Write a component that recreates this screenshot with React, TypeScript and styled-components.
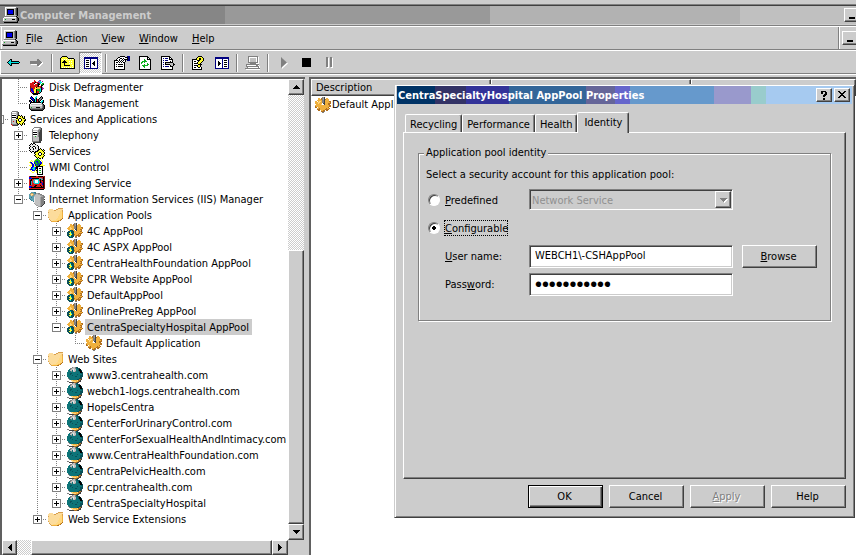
import React from "react";
import styled, { createGlobalStyle, css } from "styled-components";

const FACE = "#cccccc";
const SHADOW = "#808080";
const DARK = "#404040";
const LIGHT = "#ffffff";

const raised = css`
  border: 1px solid;
  border-color: ${LIGHT} ${DARK} ${DARK} ${LIGHT};
  box-shadow: inset -1px -1px 0 ${SHADOW};
`;

const sunken = css`
  border: 1px solid;
  border-color: ${SHADOW} ${LIGHT} ${LIGHT} ${SHADOW};
  box-shadow: inset 1px 1px 0 ${DARK}, inset -1px -1px 0 ${FACE};
`;

const dither = css`
  background: repeating-conic-gradient(#ffffff 0 25%, #cccccc 0 50%) 0 0 / 2px 2px;
`;

const GlobalStyle = createGlobalStyle`
  *, *::before, *::after { box-sizing: border-box; }
  body { margin: 0; background: ${FACE}; }
  body, button, input, select {
    font-family: "DejaVu Sans Condensed", "DejaVu Sans", Tahoma, sans-serif;
    font-size: 11px;
    color: #000000;
  }
  u { text-underline-offset: 1px; text-decoration-thickness: 1px; }
  svg { display: block; flex: none; }
`;

/* ---------- icons ---------- */

const PALETTE: Record<string, string> = {
  k: "#000000", d: "#404040", g: "#808080", l: "#c0c0c0", w: "#ffffff",
  b: "#0000e8", n: "#000080", c: "#00e0e0", t: "#0c7478", T: "#0a5058",
  y: "#ffff30", Y: "#a8a020", o: "#f0b03c", O: "#b07020", p: "#ffd880",
  r: "#d81818", R: "#801010", e: "#10b020", m: "#a020a0", s: "#e8e8e8",
  h: "#fcdc9c", H: "#d8a050", a: "#60a0b0", A: "#3a7888", q: "#a0a0a0",
};

function Pixels({ rows }: { rows: string[] }) {
  const width = Math.max(...rows.map((r) => r.length));
  const rects: React.ReactNode[] = [];
  rows.forEach((row, y) => {
    let x = 0;
    while (x < row.length) {
      let end = x + 1;
      while (end < row.length && row[end] === row[x]) end += 1;
      if (PALETTE[row[x]]) {
        rects.push(<rect key={`${x}-${y}`} x={x} y={y} width={end - x} height={1} fill={PALETTE[row[x]]} />);
      }
      x = end;
    }
  });
  return (
    <svg width={width} height={rows.length} viewBox={`0 0 ${width} ${rows.length}`} shapeRendering="crispEdges" aria-hidden="true">
      {rects}
    </svg>
  );
}

const ART = {
  computer: [
    "..wwwwwwwwwwwg..",
    "..wlllllllllgdk.",
    "..wlkkkkkkklgdk.",
    "..wlkbbbbbklgdk.",
    "..wlkbbbbbklgdk.",
    "..wlkbbbbbklgdk.",
    "..wlkbbbbbklgdk.",
    "..wlkkkkkkklgdk.",
    "..wllllllllllgk.",
    "..gggggggggggk..",
    ".wwwwwwwwwwwwgk.",
    "wllllllllllllgdk",
    "wlellllllkkklgdk",
    "wllllllllllllgdk",
    "ggggggggggggggk.",
    ".kkkkkkkkkkkkkk.",
  ],
  back: [
    "...kk........",
    "..kck........",
    ".kcckkkkkkkk.",
    "kccccccccccck",
    ".kcckkkkkkkk.",
    "..kck........",
    "...kk........",
  ],
  forward: [
    ".......gg....",
    ".......ggg...",
    "ggggggggggg..",
    "ggggggggggggw",
    "gggggggggggww",
    ".wwwwwwgggww.",
    ".......ggww..",
    "........ww...",
  ],
  up: [
    "..kkkkk........",
    ".kyyyyyk.......",
    "kyyyyyyykkkkkk.",
    "kywywywywywywyk",
    "kyyykyyyyyyyyyk",
    "kyykkkyyywywyyk",
    "kykkkkkyyyyyyyk",
    "kyyykyyyywywyyk",
    "kyyykyyyyyyyyyk",
    "kyyykkkkkkyywyk",
    "kyyyyyyyyyyyyyk",
    "kywywywywywywyk",
    "kkkkkkkkkkkkkkk",
  ],
  treeToggle: [
    "nnnnnnnnnnnnnn",
    "nnnnnnnnnnnnnn",
    "nwwwwwnwwwwwwn",
    "nwkkkwnwwwwwwn",
    "nwwwwwnwwwkwwn",
    "nwkkkwnwwkkwwn",
    "nwwwwwnwkkkwwn",
    "nwkkkwnwwkkwwn",
    "nwwwwwnwwwkwwn",
    "nwkkkwnwwwwwwn",
    "nwwwwwnwwwwwwn",
    "nnnnnnnnnnnnnn",
  ],
  paneToggle: [
    "nnnnnnnnnnnnnn",
    "nnnnnnnnnnnnnn",
    "nwwwwwwnwwwwwn",
    "nwwwwwwnwkkkwn",
    "nwwkwwwnwwwwwn",
    "nwwkkwwnwkkkwn",
    "nwwkkkwnwwwwwn",
    "nwwkkwwnwkkkwn",
    "nwwkwwwnwwwwwn",
    "nwwwwwwnwkkkwn",
    "nwwwwwwnwwwwwn",
    "nnnnnnnnnnnnnn",
  ],
  properties: [
    "......kkkkk..nnn",
    "....kkwwwwwkkknn",
    "...kwwkkwkwwwknn",
    "..kwwkwwkwkkkknn",
    "kkkkwkwkwkwk.nnn",
    "kwwwkwkwkwwk....",
    "kwkkwkwkwkk.....",
    "kwwwwwwwwwk.....",
    "kwkwkkkkkwk.....",
    "kwwwwwwwwwk.....",
    "kwkwkkkkkwk.....",
    "kwwwwwwwwwk.....",
    "kwwwwwwwwwk.....",
    "kkkkkkkkkkk.....",
  ],
  refresh: [
    "kkkkkkkkk...",
    "kwwwwwwwkk..",
    "kwwwwwwwkwk.",
    "kwwwwewwkkkk",
    "kwwwweewwwwk",
    "kwweeeeewwwk",
    "kweewewwwwwk",
    "kwewwwwwewwk",
    "kwwwwewweewk",
    "kwweeeeeewwk",
    "kwwweewwwwwk",
    "kwwwwewwwwwk",
    "kwwwwwwwwwwk",
    "kkkkkkkkkkkk",
  ],
  exportList: [
    "kkkkkkkkk.....",
    "kwwwwwwwkk....",
    "kwnwnnnwkwk...",
    "kwwwwwwwkkkk..",
    "kwnwnnnwwwwk..",
    "kwwwwwwwwkwk..",
    "kwnwkkkkkkkk..",
    "kwwwklllllllk.",
    "kwnwkkkkklllkk",
    "kwwwwwwwwkllk.",
    "kwnwnnnnwkkk..",
    "kwwwwwwwwwwk..",
    "kwwwwwwwwwwk..",
    "kkkkkkkkkkkk..",
  ],
  help: [
    "......kkkk....",
    ".....kyyyyk...",
    "....kyykkyyk..",
    "kkkkkyykkyyk..",
    "kwwwwkkkyyyk..",
    "kwkkwwkyyyk...",
    "kwwwwkyyyk....",
    "kwkkkkyyk.....",
    "kwwwwwkkkk....",
    "kwkkkkyyk.....",
    "kwwwwkyyk.....",
    "kwkkwwkkwk....",
    "kwwwwwwwwk....",
    "kkkkkkkkkk....",
  ],
  remote: [
    "...gggggggggg...",
    "...gwwwwwwwwgw..",
    "...gwllllllwgw..",
    "...gwllllllwgw..",
    "...gwllllllwgw..",
    "...gwllllllwgw..",
    "...ggggggggggw..",
    ".....ggggggwww..",
    ".ggggggggggggg..",
    ".gwwwwwwwwwggw..",
    ".gggggggggggggw.",
    "..gwwwwwwwwwwgw.",
    "ggggggggggggggg.",
    ".wwwwwwwwwwwwww.",
  ],
  gear: [
    ".......gqd......",
    "...oo.Ogqd.oo...",
    "...oooOgqdOooo..",
    "..oooooggdoooo..",
    "oo.oppoggdooooOO",
    "oooppooggdoooooO",
    "ooopooowddoooOOO",
    ".ooooopwwdoooOO.",
    "ooooooooooooooOO",
    "OoooooooooooooOO",
    "OO.ooooooooooO..",
    "..ooOooooooOooO.",
    "..OOOoooooOOOO..",
    "...OO.ooOO.OO...",
    "......OOOg......",
    ".......gg.......",
  ],
  pool: [
    ".......gqd......",
    "...oo.Ogqd.oo...",
    "...oooOgqdoooo..",
    "..oooooggdoooo..",
    ".oopoooggdooooOO",
    "oooppooggdoooooO",
    ".oopooowddoooOO.",
    "..oTTToowdooooO.",
    ".TTcTTTooooooOO.",
    "TTTyTTTooooooooO",
    "TTyycTToooooOOO.",
    "TTTyyTTOoooOoO..",
    "TTyyTTTooOOOOO..",
    ".TTcTTT.OO.OO...",
    "..TTTT..gg......",
    "................",
  ],
  globe: [
    ".....gllgTT.....",
    "...gglllgtTTT...",
    "..tgllsllttTkk..",
    ".ttlltsllttTkkT.",
    ".tttgtllgtttTkk.",
    "tttttttttttttkkT",
    "tttTTtttttttttTT",
    "tttTttttttTttttT",
    "tttttTtttttttTTT",
    "ttttttttTTtttTTT",
    ".ttttttttttttTT.",
    ".gttttttttttTTd.",
    "wwgtttttttTTOOd.",
    "wwwwppoooopOOd..",
    "ggwwwppppooOdd..",
    "..dddddOOOdd....",
  ],
  folder: [
    "..........HHHHH.",
    ".hhhh...HHhhhhh.",
    "hhhhhhHHhhhhhpH.",
    "hhhhhhhhhhhhppH.",
    "Hhhhhhhhhhhhppo.",
    "hhhhhhhhhhhhppo.",
    "hhhhhhhhhhhpppo.",
    "hhhhhhhhhhhpppo.",
    "hhhhhhhhhhppppo.",
    "Hhhhhhhhhhppppo.",
    ".hhhhhhhhpppppO.",
    ".HhhhhhhppppoO..",
    "..HhhpppppooO...",
    "...HoooooOO.....",
  ],
  server: [
    "...ggggggg..",
    "..gwwwwwlgd.",
    ".gwwwwwlggd.",
    ".glllllggdd.",
    ".gwwwwlggdd.",
    ".gkkkklgddd.",
    ".gwwwwlgddd.",
    ".gkkkklgddd.",
    ".gwwwwlgddd.",
    ".gllellgddd.",
    ".gllllllddd.",
    ".gllllllddd.",
    ".gllllllddd.",
    ".gllllllddd.",
    ".gggggggdd..",
    "..dddddddd..",
  ],
  serverGear: [
    "..gggggg........",
    ".gwwwwlgd.......",
    ".glllllgd.......",
    ".gwwwwlgd.......",
    ".gkkkklgkk.k....",
    ".gwwwwlkyykyk.k.",
    ".gkkkklkyyyykyk.",
    ".gwwwwkkykkyykk.",
    ".gllllyykwwkyyyk",
    ".gllllkykwwkyykk",
    ".glrllkyykkyyyk.",
    ".gllllkyyyyyyk..",
    ".gllllgkykyykyk.",
    ".rgggggdk.kyk.k.",
    "..rddddd...k....",
    "................",
  ],
  services: [
    "..k.kk..........",
    ".kskssks........",
    "ksssssssk.......",
    ".ksskksssk......",
    "kssk..kssk......",
    "ksssk.kssk.k....",
    ".kssksssskkyk.k.",
    "kssssssskkyyykyk",
    ".kskkskkkyyyyyk.",
    "..k..kkyyykkyyyk",
    ".....kyyyk..kyyk",
    "......kyyk..kyk.",
    ".....kyyyykkyyyk",
    "......kyyyyyyyk.",
    ".......kykyyyky.",
    "........k.kk.k..",
  ],
  defrag: [
    ".....r....mm....",
    ".....rr..mcc.m..",
    "...rrrkrrmmcc...",
    ".rrrrkwwRkrc.ee.",
    ".rrrrwrrRkk.eek.",
    ".rrrrrrrRkwwkk..",
    ".RrrrrrrRkrrk...",
    ".Rrrrrykooorkm..",
    ".RbRrryyooockmm.",
    ".Rbbryykeeeckm..",
    ".RbbryykeeeckK..",
    ".Rmbbyykrreck...",
    "..Rmbyykrrck....",
    "...kkkkkkkk.....",
    "....kkkkk.......",
  ],
  diskManage: [
    "..k....c....k...",
    ".bbk..cc...kgk..",
    ".kbbk.ck..kggk..",
    "..kbbkckrkggk...",
    "kk.kbkckrkgk.ck.",
    "kbk.kkckrkk.cck.",
    ".kkkkkkkkkkkckk.",
    ".kwwwwwwwwwwlk..",
    "kwlllllllllllgk.",
    "kssssssssssssgdk",
    "kllllllllllllgdk",
    "klellllkkkkllgdk",
    "kggggggggggggddk",
    ".kddddddddddddk.",
    "..kkkkkkkkkkkk..",
  ],
  wmi: [
    "......yeee.y....",
    "..y..yeeeee.y...",
    ".y.y.eebbeeb.y..",
    "ybb..beebeebby..",
    ".ybb.beeebebby..",
    "..ybbybebebkyy..",
    "yyybbybeebkyyyyy",
    ".y.bbyykkkkkkk..",
    "..bbccbkkwwwwk..",
    ".ybcccbkkwkkwk..",
    "ybbbccbykwwwwk..",
    ".y.bbbykkweewk..",
    "..y..y.ykwwwwk..",
    "...yy..ykweewk..",
    "........kwwwwk..",
    "........kkkkkk..",
  ],
  indexing: [
    "rkkkkkkrrkkkkkrR",
    "bbrrrrrrrrrrrrkR",
    "bbbkkkkkkkaaarkR",
    "rrkrraacccrkaakR",
    "rkkraawwwcrkrkkR",
    "rkaracwwwcakrrkR",
    "rkaracwwwcakbrkR",
    "rkarraccccrrrbkR",
    "rkarrrrrrrrrrbkR",
    "rrrrrrkkrrrkrrkR",
    "bbbrrkkrrrrrkrkR",
    "bbkkkkkkkkkkkkkR",
    "rrrrrrrrrrrrrrRR",
    "kkkkkkkkkkkkkkk.",
  ],
  iis: [
    "..aaaAA.........",
    ".aHHaaAqqgg.....",
    "aHhhHaqllqqgg...",
    "aahHaqlllllqqgg.",
    "aaaaalllllllqqgg",
    "aaAaaslllllqgggg",
    "AaaaaslllllqgggG",
    ".Aaaaslllllqgggd",
    "..AaaslllllqgggG",
    "....Aslllllqgggd",
    ".....slllllqgggd",
    ".....qlllllqgggd",
    "......qllllqggd.",
    ".......qqllqgd..",
    ".........qqgd...",
  ],
};

type IconName = keyof typeof ART;
const Icon = ({ name }: { name: IconName }) => <Pixels rows={ART[name]} />;

const Triangle = ({ dir }: { dir: "up" | "down" | "left" | "right" }) => {
  const d = { up: "M0 4h7L3.5 0z", down: "M0 0h7L3.5 4z", left: "M4 0v7L0 3.5z", right: "M0 0v7L4 3.5z" }[dir];
  const tall = dir === "left" || dir === "right";
  return (
    <svg width={tall ? 4 : 7} height={tall ? 7 : 4} shapeRendering="crispEdges" aria-hidden="true">
      <path d={d} />
    </svg>
  );
};

/* ---------- main window ---------- */

const Desktop = styled.div`
  position: relative;
  height: 100vh;
  overflow: hidden;
  display: flex;
  flex-direction: column;
  background: ${FACE};
`;

const FrameEdge = styled.div`
  flex: none;
  height: 6px;
  border-bottom: 1px solid ${DARK};
  box-shadow: inset 0 -1px 0 ${SHADOW};
`;

const TitleBar = styled.header`
  flex: none;
  display: flex;
  align-items: center;
  gap: 1px;
  height: 18px;
  padding-left: 3px;
  background: linear-gradient(90deg, #868686 0 225px, #999999 225px 490px, #b2b2b2 490px 740px, #c0c0c0 740px);
`;

const WindowTitle = styled.h1`
  flex: 1;
  margin: 0;
  font-size: 11px;
  font-weight: bold;
  color: ${FACE};
`;

const CaptionButton = styled.button<{ $overhang?: number }>`
  ${raised}
  flex: none;
  display: flex;
  align-items: center;
  justify-content: center;
  width: 16px;
  height: 14px;
  padding: 0;
  margin-right: ${(p) => -(p.$overhang ?? 0)}px;
  background: ${FACE};
`;

const MenuBand = styled.div`
  flex: none;
  display: flex;
  height: 26px;
  margin-top: 1px;
  border-top: 1px solid ${SHADOW};
  border-bottom: 1px solid ${LIGHT};
  box-shadow: inset 0 1px 0 ${LIGHT}, inset 0 -1px 0 ${SHADOW};
`;

const MenuBar = styled.nav`
  flex: 1;
  display: flex;
  align-items: center;
  gap: 8px;
  margin: 1px 0 1px 1px;
  border-left: 1px solid ${LIGHT};
  border-right: 1px solid ${SHADOW};
`;

const MenuItems = styled.div`
  display: flex;
  gap: 14px;
`;

const MenuItem = styled.button`
  padding: 1px 0 0;
  border: 0;
  background: none;
  line-height: 16px;
`;

const ChildControls = styled.div`
  flex: none;
  display: flex;
  align-items: center;
  width: 17px;
  margin: 1px 0;
  padding-left: 2px;
  border-left: 1px solid ${LIGHT};
`;

const ToolBar = styled.div`
  flex: none;
  display: flex;
  align-items: center;
  height: 24px;
  padding: 0 2px;
  border-bottom: 1px solid ${LIGHT};
  box-shadow: inset 1px 0 0 ${LIGHT}, inset 0 -1px 0 ${SHADOW};
`;

const ToolButton = styled.button<{ $pressed?: boolean }>`
  display: flex;
  align-items: center;
  justify-content: center;
  width: 23px;
  height: 22px;
  padding: 0;
  border: 1px solid transparent;
  background: none;
  ${(p) => p.$pressed && css`
    ${dither}
    border-color: ${SHADOW} ${LIGHT} ${LIGHT} ${SHADOW};
  `}
`;

const ToolDivider = styled.span`
  width: 2px;
  height: 18px;
  margin: 0 3px;
  border-left: 1px solid ${SHADOW};
  border-right: 1px solid ${LIGHT};
`;

const Panes = styled.main`
  flex: 1;
  min-height: 0;
  display: grid;
  grid-template-columns: 305px minmax(0, 1fr);
  column-gap: 4px;
  margin-top: 2px;
`;

const Pane = styled.section`
  display: flex;
  flex-direction: column;
  min-height: 0;
  overflow: hidden;
  border-top: 2px solid #606060;
  border-left: 2px solid #606060;
  background: ${LIGHT};
`;

const TreeBody = styled.div`
  flex: 1;
  min-height: 0;
  display: flex;
  border-right: 1px solid ${FACE};
`;

const Tree = styled.ul`
  flex: 1;
  min-width: 0;
  margin: 0;
  padding: 0;
  list-style: none;
  overflow: hidden;
`;

const TreeRow = styled.li`
  display: flex;
  height: 16px;
  margin-left: -12px;
  white-space: nowrap;
`;

const dots = (deg: number) =>
  `repeating-linear-gradient(${deg}deg, #808080 0 1px, transparent 1px 2px)`;

const Cell = styled.span<{ $kind: string }>`
  flex: none;
  display: flex;
  justify-content: center;
  align-items: flex-start;
  width: 19px;
  height: 16px;
  padding-top: 4px;
  background-repeat: no-repeat;
  ${(p) => p.$kind === "|" && css`
    background-image: ${dots(180)};
    background-size: 1px 16px;
    background-position: 9px 0;
  `}
  ${(p) => p.$kind === "+" && css`
    background-image: ${dots(180)}, ${dots(90)};
    background-size: 1px 16px, 10px 1px;
    background-position: 9px 0, 9px 8px;
  `}
  ${(p) => p.$kind === "L" && css`
    background-image: ${dots(180)}, ${dots(90)};
    background-size: 1px 8px, 10px 1px;
    background-position: 9px 0, 9px 8px;
  `}
`;

const Expander = styled.button<{ $open: boolean }>`
  width: 9px;
  height: 9px;
  padding: 0;
  border: 1px solid ${SHADOW};
  background:
    linear-gradient(#000, #000) center / 5px 1px no-repeat,
    linear-gradient(#000, #000) center / ${(p) => (p.$open ? "0 0" : "1px 5px")} no-repeat,
    #ffffff;
`;

const IconSlot = styled.span`
  flex: none;
  display: flex;
  align-items: center;
  justify-content: center;
  width: 19px;
  height: 16px;
  padding-right: 1px;
`;

const TreeLabel = styled.span<{ $selected?: boolean }>`
  height: 16px;
  padding: 0 3px 0 2px;
  line-height: 17px;
  background: ${(p) => (p.$selected ? FACE : "transparent")};
`;

const VScroll = styled.div`
  ${dither}
  flex: none;
  display: grid;
  grid-template-rows: 16px 155fr 274fr 16px;
  width: 16px;
`;

const HScroll = styled.div`
  ${dither}
  flex: none;
  display: grid;
  grid-template-columns: 15px 14px 1fr 16px 17px;
  height: 15px;
`;

const ScrollButton = styled.button`
  ${raised}
  display: flex;
  align-items: center;
  justify-content: center;
  padding: 0;
  background: ${FACE};
`;

const ScrollThumb = styled.div`
  ${raised}
  background: ${FACE};
`;

const ScrollCorner = styled.div`
  background: ${FACE};
`;

const ListTable = styled.table`
  width: 100%;
  border-collapse: separate;
  border-spacing: 0;
  table-layout: fixed;
`;

const ListHead = styled.th<{ $width?: number }>`
  ${raised}
  width: ${(p) => (p.$width ? `${p.$width}px` : "auto")};
  height: 17px;
  padding: 1px 4px 0;
  background: ${FACE};
  font-weight: normal;
  line-height: 14px;
  text-align: left;
`;

const ListCell = styled.td`
  padding: 0 0 0 4px;
`;

const ListEntry = styled.span`
  display: flex;
  align-items: center;
  gap: 1px;
  line-height: 17px;
  white-space: nowrap;
`;

/* ---------- dialog ---------- */

const Dialog = styled.section`
  position: absolute;
  top: 84px;
  left: 394px;
  right: 1px;
  border: 1px solid;
  border-color: ${FACE} ${DARK} ${DARK} ${FACE};
  box-shadow: inset 1px 1px 0 ${LIGHT}, inset -1px -1px 0 ${SHADOW};
  padding: 1px 2px 9px;
  background: ${FACE};
`;

const DialogTitleBar = styled.header`
  display: flex;
  align-items: center;
  gap: 2px;
  height: 18px;
  padding: 0 2px 0 1px;
  background: linear-gradient(
    90deg,
    #003366 0 38px, #333366 38px 69px, #333399 69px 112px, #336699 112px 189px,
    #666699 189px 218px, #6666cc 218px 233px, #6699cc 233px 317px,
    #9999cc 317px 354px, #99cccc 354px 369px, #a6caf0 369px
  );
`;

const DialogTitle = styled.h2`
  flex: 1;
  margin: 0;
  font-size: 11px;
  font-weight: bold;
  color: ${LIGHT};
  white-space: nowrap;
`;

const DialogBody = styled.div`
  padding: 8px 6px 0;
`;

const TabList = styled.div`
  display: flex;
  align-items: flex-end;
  height: 20px;
  padding-left: 2px;
`;

const Tab = styled.button<{ $active?: boolean }>`
  position: relative;
  height: ${(p) => (p.$active ? 21 : 18)}px;
  margin: 0 0 ${(p) => (p.$active ? -1 : 0)}px;
  padding: ${(p) => (p.$active ? "0 6px 1px" : "1px 4px 0")};
  border: 1px solid;
  border-color: ${LIGHT} ${DARK} transparent ${LIGHT};
  border-bottom: 0;
  border-radius: 2px 2px 0 0;
  box-shadow: inset -1px 0 0 ${SHADOW};
  background: ${FACE};
`;

const TabPanel = styled.div`
  ${raised}
  min-height: 347px;
  padding: 13px 14px 0;
`;

const Group = styled.fieldset`
  min-width: 0;
  margin: 0;
  padding: 8px 8px 22px;
  border: 1px solid ${SHADOW};
  box-shadow: 1px 1px 0 ${LIGHT}, inset 1px 1px 0 ${LIGHT};
`;

const GroupTitle = styled.legend`
  margin-left: -3px;
  padding: 0 2px;
  background: ${FACE};
  line-height: 14px;
`;

const Prompt = styled.p`
  margin: 0 0 7px -1px;
  line-height: 14px;
`;

const IdentityForm = styled.div`
  display: grid;
  grid-template-columns: 101px 204px 75px;
  grid-template-rows: 21px 25px 23px 23px;
  align-items: center;
  row-gap: 5px;
  padding: 0 0 2px 1px;
`;

const Choice = styled.div`
  display: flex;
  align-items: center;
  gap: 4px;
  grid-column-start: 1;
`;

const Radio = styled.input`
  appearance: none;
  flex: none;
  width: 12px;
  height: 12px;
  margin: 0;
  border: 1px solid;
  border-color: ${SHADOW} ${LIGHT} ${LIGHT} ${SHADOW};
  border-radius: 50%;
  box-shadow: inset 1px 1px 0 ${DARK};
  background: ${LIGHT};
  &:checked {
    background: radial-gradient(circle at 5px 5px, #000 0 2px, #fff 2px);
  }
`;

const ChoiceLabel = styled.label<{ $focused?: boolean }>`
  padding: 1px 0 0 1px;
  line-height: 15px;
  outline: ${(p) => (p.$focused ? "1px dotted #000" : "none")};
  outline-offset: -1px;
`;

const FieldLabel = styled.label`
  grid-column-start: 1;
  padding: 0 0 1px 17px;
`;

const TextBox = styled.input`
  ${sunken}
  width: 100%;
  height: 23px;
  padding: 0 5px 3px;
  background: ${LIGHT};
  &[type="password"] {
    padding-bottom: 0;
    font-size: 13px;
    -webkit-text-stroke: 2px #000000;
  }
`;

const SelectBox = styled.div`
  ${sunken}
  display: flex;
  height: 21px;
  padding: 1px;
  background: ${FACE};
`;

const SelectControl = styled.select`
  appearance: none;
  flex: 1;
  min-width: 0;
  padding: 1px 1px 0;
  border: 0;
  background: none;
  &:disabled { color: #909090; opacity: 1; }
`;

const SelectArrow = styled.span`
  ${raised}
  display: flex;
  align-items: center;
  justify-content: center;
  width: 16px;
  svg { fill: ${SHADOW}; filter: drop-shadow(1px 1px 0 #ffffff); }
`;

const PushButton = styled.button<{ $default?: boolean }>`
  ${raised}
  width: 75px;
  height: 23px;
  padding: 0 2px 1px 0;
  background: ${FACE};
  ${(p) => p.$default && css`
    border-color: #000000;
    box-shadow: inset 1px 1px 0 ${LIGHT}, inset -1px -1px 0 ${DARK}, inset -2px -2px 0 ${SHADOW};
  `}
  &:disabled {
    color: ${SHADOW};
    text-shadow: 1px 1px 0 ${LIGHT};
  }
`;

const BrowseButton = styled(PushButton)`
  margin-left: 9px;
`;

const DialogActions = styled.footer`
  display: flex;
  justify-content: flex-end;
  gap: 6px;
  margin-top: 6px;
`;

/* ---------- data ---------- */

type Node = { guides: string; icon: IconName; label: string; open?: boolean; selected?: boolean };

const pool = (label: string): Node => ({ guides: "  |+", icon: "pool", label, open: false });
const site = (label: string, last = false): Node => ({ guides: last ? "  |L" : "  |+", icon: "globe", label, open: false });

const NODES: Node[] = [
  { guides: "|+", icon: "defrag", label: "Disk Defragmenter" },
  { guides: "|L", icon: "diskManage", label: "Disk Management" },
  { guides: "L", icon: "serverGear", label: "Services and Applications", open: true },
  { guides: " +", icon: "server", label: "Telephony", open: false },
  { guides: " +", icon: "services", label: "Services" },
  { guides: " +", icon: "wmi", label: "WMI Control" },
  { guides: " +", icon: "indexing", label: "Indexing Service", open: false },
  { guides: " L", icon: "iis", label: "Internet Information Services (IIS) Manager", open: true },
  { guides: "  +", icon: "folder", label: "Application Pools", open: true },
  pool("4C AppPool"),
  pool("4C ASPX AppPool"),
  pool("CentraHealthFoundation AppPool"),
  pool("CPR Website AppPool"),
  pool("DefaultAppPool"),
  pool("OnlinePreReg AppPool"),
  { guides: "  |L", icon: "pool", label: "CentraSpecialtyHospital AppPool", open: true, selected: true },
  { guides: "  | L", icon: "gear", label: "Default Application" },
  { guides: "  +", icon: "folder", label: "Web Sites", open: true },
  site("www3.centrahealth.com"),
  site("webch1-logs.centrahealth.com"),
  site("HopeIsCentra"),
  site("CenterForUrinaryControl.com"),
  site("CenterForSexualHealthAndIntimacy.com"),
  site("www.CentraHealthFoundation.com"),
  site("CentraPelvicHealth.com"),
  site("cpr.centrahealth.com"),
  site("CentraSpecialtyHospital", true),
  { guides: "  L", icon: "folder", label: "Web Service Extensions", open: false },
];

const MENUS = ["File", "Action", "View", "Window", "Help"];

const MinimizeGlyph = () => (
  <svg width="8" height="8" shapeRendering="crispEdges" aria-hidden="true"><rect x="1" y="6" width="6" height="2" /></svg>
);

export default function App() {
  return (
    <Desktop>
      <GlobalStyle />
      <FrameEdge />
      <TitleBar>
        <Icon name="computer" />
        <WindowTitle>Computer Management</WindowTitle>
        <CaptionButton $overhang={4} aria-label="Minimize"><MinimizeGlyph /></CaptionButton>
      </TitleBar>
      <MenuBand>
        <MenuBar>
          <Icon name="computer" />
          <MenuItems>
            {MENUS.map((m) => <MenuItem key={m}><u>{m[0]}</u>{m.slice(1)}</MenuItem>)}
          </MenuItems>
        </MenuBar>
        <ChildControls>
          <CaptionButton aria-label="Minimize console"><MinimizeGlyph /></CaptionButton>
        </ChildControls>
      </MenuBand>
      <ToolBar>
        <ToolButton aria-label="Back"><Icon name="back" /></ToolButton>
        <ToolButton aria-label="Forward" disabled><Icon name="forward" /></ToolButton>
        <ToolDivider />
        <ToolButton aria-label="Up one level"><Icon name="up" /></ToolButton>
        <ToolButton aria-label="Show/Hide console tree" $pressed><Icon name="treeToggle" /></ToolButton>
        <ToolDivider />
        <ToolButton aria-label="Properties"><Icon name="properties" /></ToolButton>
        <ToolButton aria-label="Refresh"><Icon name="refresh" /></ToolButton>
        <ToolButton aria-label="Export list"><Icon name="exportList" /></ToolButton>
        <ToolDivider />
        <ToolButton aria-label="Help"><Icon name="help" /></ToolButton>
        <ToolButton aria-label="Show/Hide action pane"><Icon name="paneToggle" /></ToolButton>
        <ToolDivider />
        <ToolButton aria-label="Connect" disabled><Icon name="remote" /></ToolButton>
        <ToolDivider />
        <ToolButton aria-label="Start" disabled>
          <svg width="8" height="12" aria-hidden="true"><path d="M2 1l6 5.500-6 5.500z" fill="#fff" /><path d="M1 0l6 5.500L1 11z" fill="#808080" /></svg>
        </ToolButton>
        <ToolButton aria-label="Stop"><svg width="9" height="9" aria-hidden="true"><rect width="9" height="9" /></svg></ToolButton>
        <ToolButton aria-label="Pause" disabled>
          <svg width="8" height="11" shapeRendering="crispEdges" aria-hidden="true">
            <path d="M1 1h2v10H1zM5 1h2v10H5z" fill="#fff" /><path d="M0 0h2v10H0zM4 0h2v10H4z" fill="#808080" />
          </svg>
        </ToolButton>
      </ToolBar>

      <Panes>
        <Pane>
          <TreeBody>
            <Tree>
              {NODES.map((n) => (
                <TreeRow key={n.label}>
                  {n.guides.split("").map((kind, i, all) => (
                    <Cell key={i} $kind={kind}>
                      {i === all.length - 1 && n.open !== undefined && (
                        <Expander $open={n.open} aria-label={`${n.open ? "Collapse" : "Expand"} ${n.label}`} />
                      )}
                    </Cell>
                  ))}
                  <IconSlot><Icon name={n.icon} /></IconSlot>
                  <TreeLabel $selected={n.selected}>{n.label}</TreeLabel>
                </TreeRow>
              ))}
            </Tree>
            <VScroll>
              <ScrollButton aria-label="Scroll up"><Triangle dir="up" /></ScrollButton>
              <span />
              <ScrollThumb />
              <ScrollButton aria-label="Scroll down"><Triangle dir="down" /></ScrollButton>
            </VScroll>
          </TreeBody>
          <HScroll>
            <ScrollButton aria-label="Scroll left"><Triangle dir="left" /></ScrollButton>
            <span />
            <ScrollThumb />
            <ScrollButton aria-label="Scroll right"><Triangle dir="right" /></ScrollButton>
            <ScrollCorner />
          </HScroll>
        </Pane>
        <Pane>
          <ListTable>
            <thead>
              <tr>
                <ListHead $width={180}>Description</ListHead>
                <ListHead $width={200} aria-label="Local path" />
                <ListHead aria-label="Status" />
              </tr>
            </thead>
            <tbody>
              <tr>
                <ListCell colSpan={3}><ListEntry><Icon name="gear" />Default Application</ListEntry></ListCell>
              </tr>
            </tbody>
          </ListTable>
        </Pane>
      </Panes>

      <Dialog role="dialog" aria-labelledby="dialog-title">
        <DialogTitleBar>
          <DialogTitle id="dialog-title">CentraSpecialtyHospital AppPool Properties</DialogTitle>
          <CaptionButton aria-label="What's this?">
            <svg width="8" height="9" shapeRendering="crispEdges" aria-hidden="true">
              <path d="M1 0h5v1h1v3h-1v1h-1v1h-2v-2h1v-1h1v-2h-2v2h-2zM3 7h2v2h-2z" />
            </svg>
          </CaptionButton>
          <CaptionButton aria-label="Close">
            <svg width="9" height="8" shapeRendering="crispEdges" aria-hidden="true">
              <path d="M0 0h2v1h1v1h2v-1h1v-1h2v1h-1v1h-1v1h-1v1h1v1h1v1h1v1h-2v-1h-1v-1h-2v1h-1v1h-2v-1h1v-1h1v-1h1v-1h-1v-1h-1v-1h-1z" />
            </svg>
          </CaptionButton>
        </DialogTitleBar>
        <DialogBody>
          <TabList role="tablist">
            <Tab role="tab" aria-selected="false">Recycling</Tab>
            <Tab role="tab" aria-selected="false">Performance</Tab>
            <Tab role="tab" aria-selected="false">Health</Tab>
            <Tab role="tab" aria-selected="true" $active>Identity</Tab>
          </TabList>
          <TabPanel role="tabpanel">
            <Group>
              <GroupTitle>Application pool identity</GroupTitle>
              <Prompt>Select a security account for this application pool:</Prompt>
              <IdentityForm>
                <Choice>
                  <Radio type="radio" name="account" id="predefined" />
                  <ChoiceLabel htmlFor="predefined"><u>P</u>redefined</ChoiceLabel>
                </Choice>
                <SelectBox>
                  <SelectControl aria-label="Predefined account" disabled defaultValue="Network Service">
                    <option>Network Service</option>
                  </SelectControl>
                  <SelectArrow><Triangle dir="down" /></SelectArrow>
                </SelectBox>
                <Choice>
                  <Radio type="radio" name="account" id="configurable" defaultChecked />
                  <ChoiceLabel htmlFor="configurable" $focused><u>C</u>onfigurable</ChoiceLabel>
                </Choice>
                <FieldLabel htmlFor="user"><u>U</u>ser name:</FieldLabel>
                <TextBox id="user" type="text" defaultValue="WEBCH1\-CSHAppPool" />
                <BrowseButton><u>B</u>rowse</BrowseButton>
                <FieldLabel htmlFor="pass">Pass<u>w</u>ord:</FieldLabel>
                <TextBox id="pass" type="password" defaultValue="placeholder" />
              </IdentityForm>
            </Group>
          </TabPanel>
          <DialogActions>
            <PushButton $default>OK</PushButton>
            <PushButton>Cancel</PushButton>
            <PushButton disabled><u>A</u>pply</PushButton>
            <PushButton>Help</PushButton>
          </DialogActions>
        </DialogBody>
      </Dialog>
    </Desktop>
  );
}
